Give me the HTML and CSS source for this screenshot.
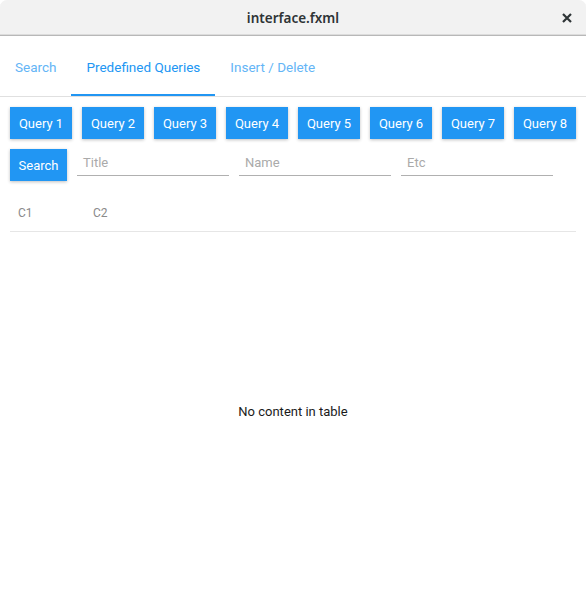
FILE: index.html
```html
<!DOCTYPE html>
<html>
<head>
<meta charset="utf-8">
<link rel="stylesheet" href="styles.css">
</head>
<body>
<div class="window">
  <div class="titlebar">
    <span class="title">interface.fxml</span>
    <svg class="close" width="10" height="10" viewBox="0 0 10 10"><path d="M1 1 L9 9 M9 1 L1 9" stroke="#2e3436" stroke-width="2.2" stroke-linecap="butt" fill="none"/></svg>
  </div>
  <div class="tabs">
    <div class="tab">Search</div>
    <div class="tab active">Predefined Queries</div>
    <div class="tab">Insert / Delete</div>
  </div>
  <div class="content">
    <div class="row">
      <button class="btn q">Query 1</button>
      <button class="btn q">Query 2</button>
      <button class="btn q">Query 3</button>
      <button class="btn q">Query 4</button>
      <button class="btn q">Query 5</button>
      <button class="btn q">Query 6</button>
      <button class="btn q">Query 7</button>
      <button class="btn q">Query 8</button>
    </div>
    <div class="row">
      <button class="btn s">Search</button>
      <div class="field">Title</div>
      <div class="field">Name</div>
      <div class="field">Etc</div>
    </div>
    <div class="table">
      <div class="thead">
        <div class="col">C1</div>
        <div class="col">C2</div>
      </div>
      <div class="tbody">No content in table</div>
    </div>
  </div>
</div>
</body>
</html>
```
FILE: styles.css
```css
html, body {
  margin: 0;
  padding: 0;
  background: #ffffff;
}
.window {
  width: 586px;
  height: 601px;
  display: flex;
  flex-direction: column;
  font-family: Roboto, "Liberation Sans", sans-serif;
  background: #ffffff;
}
.titlebar {
  height: 35px;
  flex: none;
  background: #f2f2f2;
  border-bottom: 1px solid #b8b8b8;
  border-radius: 7px 7px 0 0;
  box-shadow: inset 0 -1px 0 #dcdcdc;
  display: flex;
  align-items: center;
  justify-content: center;
  position: relative;
}
.title {
  font-family: "Noto Sans", "DejaVu Sans", sans-serif;
  font-weight: 600;
  font-size: 13.5px;
  color: #2e3436;
  margin-top: 1px;
}
.close {
  position: absolute;
  right: 14px;
  top: 13px;
}
.tabs {
  height: 60px;
  flex: none;
  display: flex;
  border-bottom: 1px solid #e0e0e0;
}
.tab {
  font-size: 13.5px;
  color: #64b5f6;
  padding: 3px 15px 0;
  display: flex;
  align-items: center;
  box-sizing: border-box;
  border-bottom: 2px solid transparent;
}
.tab.active {
  color: #2196f3;
  border-bottom-color: #2196f3;
}
.content {
  flex: 1;
  padding: 10px;
  display: flex;
  flex-direction: column;
  gap: 10px;
}
.row {
  display: flex;
  gap: 10px;
  align-items: flex-start;
}
.btn {
  height: 32px;
  border: none;
  border-radius: 0;
  background: #2196f3;
  color: #ffffff;
  font-family: Roboto, "Liberation Sans", sans-serif;
  font-size: 13px;
  padding: 0;
  box-shadow: 0 1px 3px rgba(0, 0, 0, 0.25);
}
.btn.q {
  width: 62px;
}
.btn.s {
  width: 57px;
}
.field {
  width: 152px;
  height: 27px;
  box-sizing: border-box;
  border-bottom: 1px solid #b0b0b0;
  color: #aaaaaa;
  font-size: 13px;
  padding-left: 6px;
  padding-top: 1px;
  display: flex;
  align-items: center;
}
.table {
  flex: 1;
  display: flex;
  flex-direction: column;
}
.thead {
  height: 41px;
  flex: none;
  box-sizing: border-box;
  padding-top: 4px;
  display: flex;
  align-items: center;
  border-bottom: 1px solid #e6e6e6;
}
.col {
  width: 75px;
  padding-left: 8px;
  box-sizing: border-box;
  font-size: 12px;
  color: #8a8a8a;
}
.tbody {
  flex: 1;
  display: flex;
  align-items: center;
  justify-content: center;
  font-size: 13px;
  color: #1a1a1a;
}
```
